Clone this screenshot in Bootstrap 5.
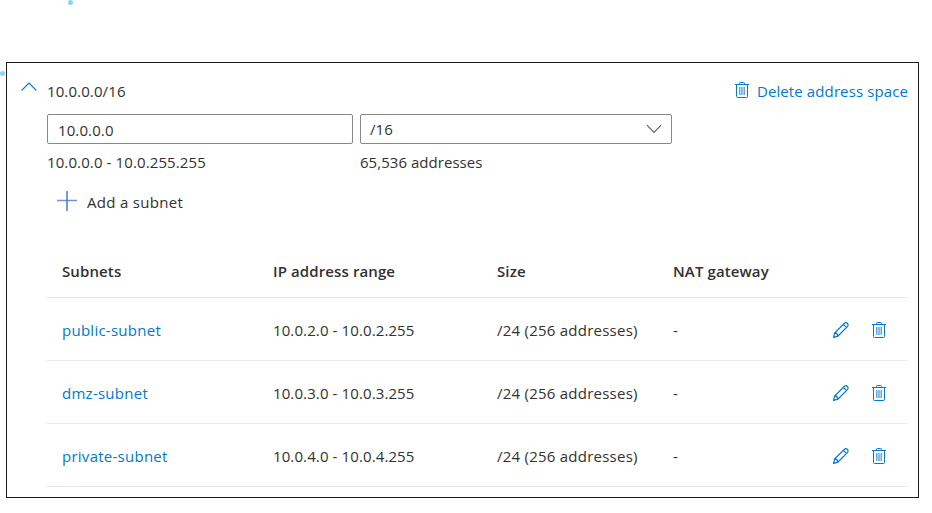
<!DOCTYPE html>
<html lang="en">
<head>
<meta charset="utf-8">
<meta name="viewport" content="width=device-width, initial-scale=1">
<title>Address space</title>
<link rel="stylesheet" href="https://cdn.jsdelivr.net/npm/bootstrap@5.3.0/dist/css/bootstrap.min.css">
<style>
body{font-family:"Segoe UI","Open Sans",sans-serif;font-size:15px;line-height:20px;color:#323130;background:#fff;overflow:hidden;letter-spacing:.11px}
a{color:#0078d4;text-decoration:none}
.panel{width:913px;height:436px;margin:62px 0 0 6px;border:1px solid #1b1b1b;padding:18px 10px 0 15px}
.spot{position:absolute;width:5px;height:5px;border-radius:50%;background:#83d5fb}
.spot-a{left:68px;top:0}
.spot-b{left:0;top:71px}
.title-row{height:20px}
.chev{margin:1px 10px 0 -1px}
.bin{margin:1px 8px 0 0}
.inner{padding-left:25px}
.field{height:30px;border:1px solid #8a8886;border-radius:2px;padding:0 9px 0 10px;background:#fff}
.field-ip{width:306px;padding-top:1px}
.field-size{width:312px;padding-left:9px}
.fields{margin-top:13px;gap:7px}
.hint{margin-top:8px}
.hint-count{letter-spacing:.04px}
.add{margin:20px 0 0 10px;height:22px;letter-spacing:.3px}
.add svg{margin-top:-1px}
.add span{margin-left:10px}
.subnets{margin:31px 0 0;width:861px;table-layout:fixed;--bs-table-bg:transparent;color:#323130}
.subnets>:not(caption)>*>*{padding:3px 0 0 15px;height:63px;vertical-align:middle;border-bottom:1px solid #eaeaea;white-space:nowrap;color:inherit}
.subnets>thead>tr>*{height:52px;font-weight:600;padding-top:0}
.subnets td a{letter-spacing:.26px}
.subnets td:nth-child(3){letter-spacing:.24px}
.acts{gap:23px;padding-right:22px}
svg{display:block;flex:none}
</style>
</head>
<body>
<svg width="0" height="0" class="position-absolute">
<symbol id="trash" viewBox="0 0 14 16"><g fill="none" stroke="#0078d4"><path d="M0 2.5h14M4.5 2.5V1.3q0-.8.8-.8h3.4q.8 0 .8.8v1.2M1.5 2.5v12q0 1 1 1h9q1 0 1-1v-12"/><path d="M4.8 5v8M7 5v8M9.2 5v8" stroke-width="1.2" stroke-opacity=".8"/></g></symbol>
<symbol id="pencil" viewBox="0 0 16 16"><path d="M.6 15.4l1.2-4.7L11.5 1.2q1.4-1.2 2.8.1t.3 3L4.9 14.1zM1.8 10.7q2.8.4 3.1 3.4M10.4 2.4l3.2 3.2" fill="none" stroke="#0078d4" stroke-width="1.2"/></symbol>
</svg>
<span class="spot spot-a"></span><span class="spot spot-b"></span>
<main class="panel">
<div class="title-row d-flex">
<svg class="chev" width="16" height="10" viewBox="0 0 16 10"><path d="M.6 8.5L8 1.1l7.4 7.4" fill="none" stroke="#0078d4" stroke-width="1.1"/></svg>
<span>10.0.0.0/16</span>
<a href="#" class="d-flex ms-auto"><svg class="bin" width="14" height="16"><use href="#trash"/></svg><span>Delete address space</span></a>
</div>
<div class="inner">
<div class="d-flex fields">
<div><div class="field field-ip d-flex align-items-center">10.0.0.0</div><div class="hint">10.0.0.0 - 10.0.255.255</div></div>
<div><div class="field field-size d-flex align-items-center justify-content-between"><span>/16</span><svg width="16" height="10" viewBox="0 0 16 10"><path d="M.9 1.1L8 8.4l7.1-7.3" fill="none" stroke="#605e5c" stroke-width="1.1"/></svg></div><div class="hint hint-count">65,536 addresses</div></div>
</div>
<div class="add d-flex"><svg width="20" height="20" viewBox="0 0 20 20"><path d="M0 9.5h20" stroke="#6a94dc" stroke-width="1.5"/><path d="M10 0v20" stroke="#4b79c8" stroke-width="1.5"/></svg><span>Add a subnet</span></div>
<table class="table subnets">
<colgroup><col style="width:211px"><col style="width:224px"><col style="width:176px"><col style="width:120px"><col></colgroup>
<thead><tr><th>Subnets</th><th>IP address range</th><th>Size</th><th>NAT gateway</th><th></th></tr></thead>
<tbody>
<tr><td><a href="#">public-subnet</a></td><td>10.0.2.0 - 10.0.2.255</td><td>/24 (256 addresses)</td><td>-</td><td><div class="acts d-flex justify-content-end"><svg width="16" height="16"><use href="#pencil"/></svg><svg width="14" height="16"><use href="#trash"/></svg></div></td></tr>
<tr><td><a href="#">dmz-subnet</a></td><td>10.0.3.0 - 10.0.3.255</td><td>/24 (256 addresses)</td><td>-</td><td><div class="acts d-flex justify-content-end"><svg width="16" height="16"><use href="#pencil"/></svg><svg width="14" height="16"><use href="#trash"/></svg></div></td></tr>
<tr><td><a href="#">private-subnet</a></td><td>10.0.4.0 - 10.0.4.255</td><td>/24 (256 addresses)</td><td>-</td><td><div class="acts d-flex justify-content-end"><svg width="16" height="16"><use href="#pencil"/></svg><svg width="14" height="16"><use href="#trash"/></svg></div></td></tr>
</tbody>
</table>
</div>
</main>
<script src="https://cdn.jsdelivr.net/npm/bootstrap@5.3.0/dist/js/bootstrap.bundle.min.js"></script>
</body>
</html>
